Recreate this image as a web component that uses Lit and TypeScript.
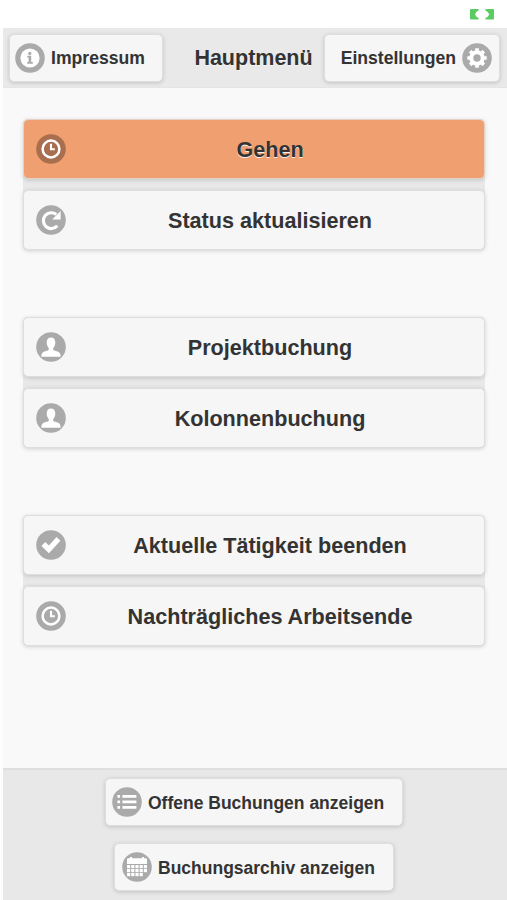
import { LitElement, html, css, svg, TemplateResult } from "lit";
import { customElement, property } from "lit/decorators.js";

const glyphs: Record<string, TemplateResult> = {
  info: svg`<circle cx="15" cy="15" r="9.6" fill="#fff"/><circle cx="14.8" cy="10.4" r="1.6" fill="#aaa"/><path d="M12.3 12.8H16.2v6.2h1.6v1.8h-5.6V19h1.4v-4.4h-1.3z" fill="#aaa"/>`,
  gear: svg`<circle cx="15" cy="15" r="5.7" fill="none" stroke="#fff" stroke-width="4"/><g stroke="#fff" stroke-width="3.6">
    ${[0, 45, 90, 135].map((a) => svg`<path d="M15 5.3V8.6M15 21.4v3.3" transform="rotate(${a} 15 15)"/>`)}</g>`,
  clock: svg`<circle cx="15" cy="15" r="8.4" fill="none" stroke="#fff" stroke-width="2.5"/><path d="M15 9.8V15.3H18.8" fill="none" stroke="#fff" stroke-width="2.1"/>`,
  refresh: svg`<path d="M21.3 20.8A7.9 7.9 0 1 1 20.3 9.5" fill="none" stroke="#fff" stroke-width="3.2"/><path d="M24.6 6V14.4H16.2z" fill="#fff"/>`,
  user: svg`<path d="M15 5.4c2.7 0 4.3 2 4.3 4.900 0 2.800-1 4.500-2 5.600-.5 1.800.2 2.400 1.800 2.900 3.200.9 5.500 1.600 5.500 5.200v.7H5.400V24c0-3.600 2.300-4.300 5.500-5.200 1.600-.5 2.300-1.100 1.800-2.900-1-1.100-2-2.800-2-5.600 0-2.900 1.600-4.900 4.300-4.900z" fill="#fff"/>`,
  check: svg`<path d="M5.5 15.9 9.2 12l3.7 3.5L20.6 7l3.800 3.700L12.900 23.200z" fill="#fff"/>`,
  list: svg`<path d="M5.400 8.100h2.700v2.700H5.400zM5.400 13.600h2.700v2.700H5.400zM5.400 19.100h2.700v2.700H5.400zM10.400 8.100h14v2.700h-14zM10.400 13.600h14v2.700h-14zM10.400 19.100h14v2.700h-14z" fill="#fff"/>`,
  calendar: svg`<path d="M5 12V7.500q0-1.300 1.300-1.300H8V5h2v1.200h10V5h2v1.200h1.700q1.300 0 1.300 1.300V12z" fill="#fff"/>
    <g fill="#fff">${[13, 17, 21].map((y, row) => [5, 9.2, 13.4, 17.6, 21.8].slice(0, row === 2 ? 4 : 5).map((x) => svg`<rect x=${x} y=${y} width="3.2" height="3.2"/>`))}</g>`,
};

@customElement("round-icon")
class RoundIcon extends LitElement {
  @property() name = "info";
  @property({ type: Boolean }) dark = false;
  static styles = css`
    :host { display: block; width: 30px; height: 30px; flex: none; }
    svg { display: block; }
  `;
  render() {
    return html`<svg width="30" height="30" viewBox="0 0 30 30">
      <circle cx="15" cy="15" r="14.8" fill=${this.dark ? "#a86e4d" : "#aaa"}></circle>${glyphs[this.name]}
    </svg>`;
  }
}

const groups = [
  [["clock", "Gehen"], ["refresh", "Status aktualisieren"]],
  [["user", "Projektbuchung"], ["user", "Kolonnenbuchung"]],
  [["check", "Aktuelle Tätigkeit beenden"], ["clock", "Nachträgliches Arbeitsende"]],
];

@customElement("app-root")
class AppRoot extends LitElement {
  static styles = css`
    :host {
      display: flex; flex-direction: column; box-sizing: border-box;
      width: 507px; height: 900px; overflow: hidden; background: #f9f9f9;
      font-family: "Liberation Sans", Arial, sans-serif; font-weight: bold; color: #333;
    }
    .status { height: 28px; flex: none; background: #fff; display: flex; justify-content: flex-end; box-sizing: border-box; padding: 9px 12px 0 0; }
    .status svg { display: block; }
    .body { flex: 1; display: flex; flex-direction: column; border-left: 3px solid #fdfdfd; min-height: 0; }
    header {
      height: 60px; box-sizing: border-box; flex: none; background: #e9e9e9; border-bottom: 1px solid #e5e5e5;
      display: grid; grid-template-columns: 154px 1fr 176px; align-items: start; padding: 6px 7px 0 6px;
    }
    h1 { margin: 0 0 0 20px; font-size: 21.5px; line-height: 49px; text-align: center; text-shadow: 0 1px 0 #f3f3f3; white-space: nowrap; }
    button {
      font: inherit; color: inherit; background: #f6f6f6; border: 1px solid #dedede; border-radius: 5px;
      box-shadow: 0 1px 4px rgba(0, 0, 0, .17); text-shadow: 0 1px 0 #f3f3f3; box-sizing: border-box;
      margin: 0; padding: 0; white-space: nowrap;
    }
    .small { height: 48px; font-size: 17.6px; display: flex; align-items: center; gap: 6px; padding: 0 5px 1px; }
    .right { justify-content: flex-end; padding-right: 7px; }
    .text { padding-top: 2px; }
    main { flex: 1; padding: 31.4px 22px 0 20px; }
    .group { display: flex; flex-direction: column; gap: 11px; background: #e8e8e8; border-radius: 5px; margin-bottom: 67.4px; height: 130.5px; }
    .big { width: 100%; height: 60px; font-size: 21.6px; display: grid; grid-template-columns: 30px 1fr; align-items: center; padding: 0 12px; }
    .label { text-align: center; padding-top: 2px; padding-left: 2px; }
    .active { background: #f09f70; border-color: #e6d2c5; background-clip: padding-box; }
    footer { height: 132px; box-sizing: border-box; flex: none; background: #e8e8e8; border-top: 2px solid #dfdfdf; display: flex; flex-direction: column; align-items: center; gap: 17px; padding: 8px 2px 0 0; }
    .open { width: 298px; padding-left: 6px; }
    .archive { width: 280px; padding-left: 7px; }
    footer .text { padding-top: 3px; font-size: 17.5px; }
  `;
  render() {
    return html`
      <div class="status">
        <svg width="26" height="11" viewBox="0 0 26 11" fill="#5ccb62">
          <path d="M2 0H9.500V1.500L7.300 3 6 5.500 7.600 8 9.500 8.800V10.500H2Q1 10.500 1 9.500V1Q1 0 2 0zM16.500 0H24Q25 0 25 1V9.500Q25 10.500 24 10.500H16.500V9L18.800 7.800 20.300 5.300 18.500 2.800 16.500 1.800z"/>
        </svg>
      </div>
      <div class="body">
        <header>
          <button class="small"><round-icon name="info"></round-icon><span class="text">Impressum</span></button>
          <h1>Hauptmenü</h1>
          <button class="small right"><span class="text">Einstellungen</span><round-icon name="gear"></round-icon></button>
        </header>
        <main>
          ${groups.map((items) => html`<div class="group">${items.map(([icon, label]) => {
            const active = label === "Gehen";
            return html`<button class="big ${active ? "active" : ""}">
              <round-icon name=${icon} ?dark=${active}></round-icon><span class="label">${label}</span>
            </button>`;
          })}</div>`)}
        </main>
        <footer>
          <button class="small open"><round-icon name="list"></round-icon><span class="text">Offene Buchungen anzeigen</span></button>
          <button class="small archive"><round-icon name="calendar"></round-icon><span class="text">Buchungsarchiv anzeigen</span></button>
        </footer>
      </div>`;
  }
}
